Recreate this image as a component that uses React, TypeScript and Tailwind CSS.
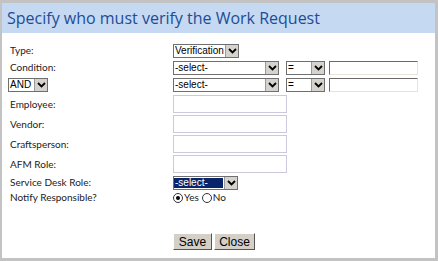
import React from 'react'

const Chevron = () => (
  <svg width="9" height="6" viewBox="0 0 9 6">
    <polyline points="1,1 4.5,4.5 8,1" fill="none" stroke="#000" strokeWidth="1.8" />
  </svg>
)

interface SelectBoxProps {
  value: string
  width: number
  highlight?: boolean
}

const SelectBox = ({ value, width, highlight }: SelectBoxProps) => (
  <div
    className="flex h-[14px] items-stretch border border-[#6f6f6f] bg-white"
    style={{ width, fontFamily: '"Liberation Sans", Arial, sans-serif' }}
  >
    <div className="flex min-w-0 flex-1 items-center py-px pr-px">
      <span
        className={`flex h-full flex-1 items-center whitespace-nowrap pl-px text-[10px] leading-none ${
          highlight ? 'bg-[#0a246a] text-white' : 'text-black'
        }`}
      >
        {value}
      </span>
    </div>
    <div className="flex w-[13px] shrink-0 items-center justify-center border-l border-[#9a9a9a] bg-[#d6d3ce]">
      <Chevron />
    </div>
  </div>
)

const InsetInput = () => (
  <div className="h-[14px] w-[89px] border-t border-l border-t-[#6a6a6a] border-l-[#6a6a6a] border-r border-b border-r-[#e8e2d8] border-b-[#e8e2d8] bg-white" />
)

const TextBox = () => <div className="h-[18px] w-[114px] border border-[#cdc8de] bg-white" />

const Label = ({ children }: { children: React.ReactNode }) => (
  <div className="w-[171px] shrink-0 pl-[8px] text-[10px] text-[#222]">{children}</div>
)

const Radio = ({ checked }: { checked?: boolean }) => (
  <span className="flex h-[10px] w-[10px] items-center justify-center rounded-full border border-[#333] bg-white">
    {checked && <span className="h-[4px] w-[4px] rounded-full bg-black" />}
  </span>
)

const Button = ({ children, width }: { children: React.ReactNode; width: number }) => (
  <button
    className="flex h-[17px] items-center justify-center border border-t-white border-l-white border-r-[#555] border-b-[#555] bg-[#d4d0c8] text-[12px] text-black"
    style={{ width, fontFamily: '"Liberation Sans", Arial, sans-serif' }}
  >
    {children}
  </button>
)

export default function App() {
  return (
    <div className="flex h-[261px] w-[438px] flex-col border-t-[3px] border-l-[2px] border-r-[3px] border-b-[3px] border-[#c3c3c3] bg-white">
      <div className="flex h-[30px] shrink-0 items-center bg-[#c6d9f3] pl-[5px]">
        <h1
          className="text-[16px] leading-none text-[#1d4c96]"
          style={{ fontFamily: '"Open Sans", "DejaVu Sans", sans-serif' }}
        >
          Specify who must verify the Work Request
        </h1>
      </div>

      <div className="flex flex-col pt-[9px]" style={{ fontFamily: 'Lato, "Open Sans", sans-serif' }}>
        <div className="flex h-[17px] items-center">
          <Label>Type:</Label>
          <SelectBox value="Verification" width={66} />
        </div>
        <div className="flex h-[17px] items-center">
          <Label>Condition:</Label>
          <div className="flex items-center">
            <SelectBox value="-select-" width={106} />
            <div className="ml-[7px]">
              <SelectBox value="=" width={39} />
            </div>
            <div className="ml-[4px]">
              <InsetInput />
            </div>
          </div>
        </div>
        <div className="flex h-[17px] items-center">
          <div className="w-[171px] shrink-0 pl-[6px]">
            <SelectBox value="AND" width={40} />
          </div>
          <div className="flex items-center">
            <SelectBox value="-select-" width={106} />
            <div className="ml-[7px]">
              <SelectBox value="=" width={39} />
            </div>
            <div className="ml-[4px]">
              <InsetInput />
            </div>
          </div>
        </div>

        <div className="mt-px flex h-[20px] items-center">
          <Label>Employee:</Label>
          <TextBox />
        </div>
        <div className="flex h-[20px] items-center">
          <Label>Vendor:</Label>
          <TextBox />
        </div>
        <div className="flex h-[20px] items-center">
          <Label>Craftsperson:</Label>
          <TextBox />
        </div>
        <div className="flex h-[20px] items-center">
          <Label>AFM Role:</Label>
          <TextBox />
        </div>

        <div className="mt-px flex h-[15px] items-center">
          <Label>Service Desk Role:</Label>
          <SelectBox value="-select-" width={65} highlight />
        </div>
        <div className="flex h-[15px] items-center">
          <Label>Notify Responsible?</Label>
          <div className="flex items-center text-[10px] text-[#222]">
            <Radio checked />
            <span className="ml-px">Yes</span>
            <span className="ml-[3px]">
              <Radio />
            </span>
            <span className="ml-px">No</span>
          </div>
        </div>

        <div className="mt-[28px] flex h-[17px] items-center pl-[171px]">
          <Button width={39}>Save</Button>
          <div className="ml-[2px]">
            <Button width={41}>Close</Button>
          </div>
        </div>
      </div>
    </div>
  )
}
